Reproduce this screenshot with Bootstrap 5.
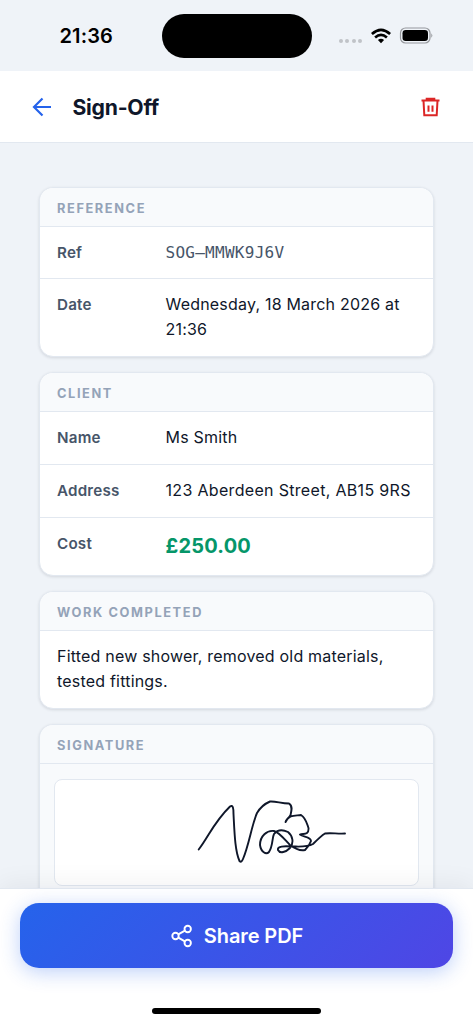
<!DOCTYPE html>
<html lang="en">
<head>
<meta charset="utf-8">
<meta name="viewport" content="width=device-width, initial-scale=1">
<title>Sign-Off</title>
<link href="https://cdn.jsdelivr.net/npm/bootstrap@5.3.0/dist/css/bootstrap.min.css" rel="stylesheet">
<style>
  body { font-family: Inter, "Liberation Sans", sans-serif; background: #eff3f8; color: #0f172a; font-size: 16px; line-height: 25px; letter-spacing: .2px; }
  .screen { height: 1024px; }
  .status-bar { height: 71px; }
  .status-time { width: 161.5px; padding: 1px 0 0 59.5px; font-size: 20px; font-weight: 600; color: #000; letter-spacing: .15px; }
  .island { width: 150px; height: 44px; background: #000; }
  .status-icons { padding-left: 27px; }
  .signal-dots { gap: 2.5px; padding-top: 10px; margin-right: 9px; }
  .signal-dots i { width: 4px; height: 4px; border-radius: 50%; background: #c0c3c8; }
  .app-header { height: 72px; background: #fff; border-bottom: 1px solid #e2e8f0; padding: 0 30px; }
  .app-title { font-size: 21.2px; font-weight: 700; letter-spacing: -.25px; line-height: 28px; margin: 0 0 0 18.5px; padding-top: 1px; }
  .content { padding: 44px 39px 0; overflow: hidden; min-height: 0; }
  .panel { background: #fff; border: 1px solid #e2e8f0; border-radius: 14px; box-shadow: 0 1px 3px rgba(15,23,42,.12); margin-bottom: 15px; overflow: hidden; flex: none; }
  .panel-title { height: 39px; background: #f8fafc; border-bottom: 1px solid #e2e8f0; padding: 4px 17px 0; font-size: 12.8px; font-weight: 700; letter-spacing: 1.6px; color: #94a3b8; margin: 0; }
  .field { border-bottom: 1px solid #e2e8f0; padding: 13px 17px; height: 53px; }
  .field:last-child { border-bottom: 0; }
  .field dt { width: 108.5px; font-size: 15.2px; font-weight: 600; color: #475569; flex: none; }
  .field dd { margin: 0; }
  .address { letter-spacing: .32px; }
  .ref-code { font-family: "DejaVu Sans Mono", monospace; font-size: 16px; letter-spacing: .27px; color: #475569; }
  .cost { font-size: 20px; font-weight: 700; line-height: 30px; color: #059669; }
  .work { padding: 13px 17px; height: 77px; }
  .sign-pad { margin: 15px 14px; height: 107px; background: #fff; border: 1px solid #e2e8f0; border-radius: 8px; }
  .action-bar { height: 136px; background: #fff; border-top: 1px solid #e2e8f0; padding: 14px 20px 0 20px; box-shadow: 0 -4px 24px rgba(15,23,42,.06); position: relative; }
  .share-btn { height: 65px; border: 0; border-radius: 19px; color: #fff; font-size: 20px; font-weight: 600; letter-spacing: -.1px; background: linear-gradient(135deg, #2563eb, #4f46e5); box-shadow: 0 4px 20px rgba(37,99,235,.3); gap: 10px; }
  .home-indicator { width: 169px; height: 6px; background: #000; margin: 40px auto 0; }
</style>
</head>
<body>
<div class="screen d-flex flex-column overflow-hidden">
  <div class="status-bar d-flex align-items-center flex-shrink-0">
    <div class="status-time flex-shrink-0">21:36</div>
    <div class="island rounded-pill flex-shrink-0"></div>
    <div class="status-icons d-flex align-items-center">
      <div class="signal-dots d-flex"><i></i><i></i><i></i><i></i></div>
      <svg width="20" height="16" viewBox="0 0 20 16" fill="none" stroke="#000" stroke-width="2.700"><path d="M.9 6Q10-2.200 19.100 6M4.100 9.500q5.900-5.100 11.800 0"/><path d="M10 15.200l-3.100-3.100q3.100-2.600 6.200 0z" fill="#000" stroke="none"/></svg>
      <svg class="ms-2" width="34" height="17" viewBox="0 0 34 17"><rect x="1.500" y="1" width="29.500" height="15" rx="5" fill="none" stroke="#96989d" stroke-width="1.200"/><rect x="3.500" y="3" width="25.500" height="11" rx="3.200"/><path d="M32.300 6.200q2 2.300 0 4.600z" fill="#96989d"/></svg>
    </div>
  </div>
  <header class="app-header d-flex align-items-center flex-shrink-0">
    <svg width="24" height="24" viewBox="0 0 24 24" fill="none" stroke="#2563eb" stroke-width="2.200"><path d="M21 12H4M12.500 3.500 4 12l8.500 8.500"/></svg>
    <h1 class="app-title">Sign-Off</h1>
    <svg class="ms-auto" width="24" height="24" viewBox="0 0 24 24" fill="none" stroke="#dc2626" stroke-width="2"><path d="M2.500 5.400h18M7.700 4.900V3.700h7.600v1.200M4.500 5.500l.8 14.700h12.400l.8-14.700M9.500 10.500v6.200M13.500 10.500v6.200"/></svg>
  </header>
  <main class="content d-flex flex-column flex-grow-1">
    <section class="panel">
      <h2 class="panel-title d-flex align-items-center">REFERENCE</h2>
      <dl class="m-0">
        <div class="field d-flex" style="height:52px"><dt>Ref</dt><dd class="ref-code">SOG–MMWK9J6V</dd></div>
        <div class="field d-flex" style="height:77px"><dt>Date</dt><dd>Wednesday, 18 March 2026 at<br>21:36</dd></div>
      </dl>
    </section>
    <section class="panel">
      <h2 class="panel-title d-flex align-items-center">CLIENT</h2>
      <dl class="m-0">
        <div class="field d-flex"><dt>Name</dt><dd>Ms Smith</dd></div>
        <div class="field d-flex"><dt>Address</dt><dd class="address text-nowrap">123 Aberdeen Street, AB15 9RS</dd></div>
        <div class="field d-flex" style="height:56.500px"><dt>Cost</dt><dd class="cost">£250.00</dd></div>
      </dl>
    </section>
    <section class="panel">
      <h2 class="panel-title d-flex align-items-center">WORK COMPLETED</h2>
      <div class="work">Fitted new shower, removed old materials,<br>tested fittings.</div>
    </section>
    <section class="panel" style="background:#f8fafc">
      <h2 class="panel-title d-flex align-items-center">SIGNATURE</h2>
      <div class="sign-pad">
        <svg class="d-block" width="362" height="105" viewBox="55 780 362 105" fill="none" stroke="#0f172a" stroke-width="1.900" stroke-linecap="round" stroke-linejoin="round">
          <path d="M198.700 849.500C209 836 214 822 230 806.500C233 804.500 233.500 808 233.500 814C234.500 833 235 851 239.500 861C241 862.500 242 861.500 243 859C249 845 252 824 257 813C260 808 264 804 270 801.500C276 801 281 803.500 289 803.500C293 806 291.500 811 290.500 815C289 818 286.500 819 285.500 822C289 814 296 816 301 815C306 818 307 824 308.500 828C309 836 303 833 300 834.500C303 837 311 837 311 841C310 844 307 848 305 850C299 851.500 294 848 290 845C285 840 279 832 274 831C267 830 260 836 260 845C261 852 266 855 269 852C273 846 272 838 274 834C278 829 284 830 288 832C293 836 294 843 290 848C286 852 280 854 278 850C277 846 284 846 292 846.500C299 846.500 307 847.500 313 844C318 839 321 836 325 833.500C331 832.500 337 834 345 833.500"/>
        </svg>
      </div>
    </section>
  </main>
  <footer class="action-bar flex-shrink-0">
    <button type="button" class="share-btn btn w-100 d-flex align-items-center justify-content-center">
      <svg width="24" height="24" viewBox="0 0 24 24" fill="none" stroke="#fff" stroke-width="1.900"><circle cx="5.500" cy="12" r="3.200"/><circle cx="17.700" cy="5" r="3.200"/><circle cx="17.700" cy="19" r="3.200"/><path d="m8.300 10.400 6.600-3.800M8.300 13.600l6.600 3.800"/></svg>
      <span>Share PDF</span>
    </button>
    <div class="home-indicator rounded-pill"></div>
  </footer>
</div>
<script src="https://cdn.jsdelivr.net/npm/bootstrap@5.3.0/dist/js/bootstrap.bundle.min.js"></script>
</body>
</html>
